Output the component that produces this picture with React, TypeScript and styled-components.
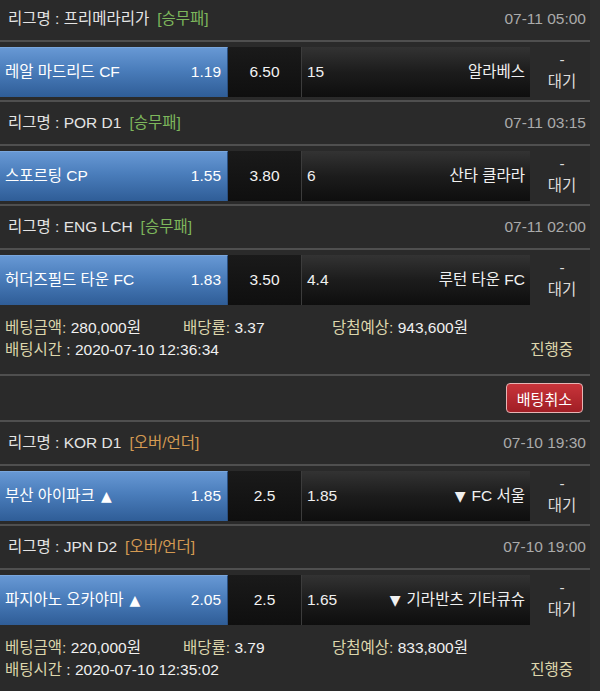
import styled, { createGlobalStyle } from 'styled-components'

const GlobalStyle = createGlobalStyle`
  html, body {
    margin: 0;
    padding: 0;
    background: #2e2e2e;
  }
  body {
    font-family: "Liberation Sans", "Noto Sans CJK KR", sans-serif;
    font-size: 15.5px;
    color: #e8e8e8;
    overflow: hidden;
  }
`

interface Match {
  league: string
  type: string
  date: string
  home: string
  homeOdds: string
  draw: string
  awayOdds: string
  away: string
  overUnder?: boolean
}

interface Bet {
  matches: Match[]
  amount: string
  rate: string
  expect: string
  time: string
  cancelable?: boolean
}

const bets: Bet[] = [
  {
    matches: [
      { league: '프리메라리가', type: '승무패', date: '07-11 05:00', home: '레알 마드리드 CF', homeOdds: '1.19', draw: '6.50', awayOdds: '15', away: '알라베스' },
      { league: 'POR D1', type: '승무패', date: '07-11 03:15', home: '스포르팅 CP', homeOdds: '1.55', draw: '3.80', awayOdds: '6', away: '산타 클라라' },
      { league: 'ENG LCH', type: '승무패', date: '07-11 02:00', home: '허더즈필드 타운 FC', homeOdds: '1.83', draw: '3.50', awayOdds: '4.4', away: '루턴 타운 FC' },
    ],
    amount: '280,000원',
    rate: '3.37',
    expect: '943,600원',
    time: '2020-07-10 12:36:34',
    cancelable: true,
  },
  {
    matches: [
      { league: 'KOR D1', type: '오버/언더', date: '07-10 19:30', home: '부산 아이파크', homeOdds: '1.85', draw: '2.5', awayOdds: '1.85', away: 'FC 서울', overUnder: true },
      { league: 'JPN D2', type: '오버/언더', date: '07-10 19:00', home: '파지아노 오카야마', homeOdds: '2.05', draw: '2.5', awayOdds: '1.65', away: '기라반츠 기타큐슈', overUnder: true },
    ],
    amount: '220,000원',
    rate: '3.79',
    expect: '833,800원',
    time: '2020-07-10 12:35:02',
  },
]

export default function App() {
  return (
    <>
      <GlobalStyle />
      <Page>
        {bets.map((bet, i) => (
          <div key={i}>
            {bet.matches.map((m, j) => (
              <div key={j}>
                <Header>
                  <League>
                    리그명 : {m.league}
                    <GameType $ou={!!m.overUnder}>[{m.type}]</GameType>
                  </League>
                  <DateText>{m.date}</DateText>
                </Header>
                <RowWrap $last={j === bet.matches.length - 1}>
                  <Row>
                    <HomeCell>
                      <span>
                        {m.home}
                        {m.overUnder && <Triangle>▲</Triangle>}
                      </span>
                      <span>{m.homeOdds}</span>
                    </HomeCell>
                    <DrawCell>{m.draw}</DrawCell>
                    <AwayCell>
                      <span>{m.awayOdds}</span>
                      <span>
                        {m.overUnder && <Triangle $left>▼</Triangle>}
                        {m.away}
                      </span>
                    </AwayCell>
                    <StatusCell>
                      <span>-</span>
                      <span>대기</span>
                    </StatusCell>
                  </Row>
                </RowWrap>
              </div>
            ))}
            <Info>
              <InfoItem>
                <Label>베팅금액:</Label> {bet.amount}
              </InfoItem>
              <InfoItem>
                <Label>배당률:</Label> {bet.rate}
              </InfoItem>
              <InfoItem>
                <Label>당첨예상:</Label> {bet.expect}
              </InfoItem>
              <TimeItem>
                <Label>배팅시간</Label> : {bet.time}
              </TimeItem>
              <Progress>진행중</Progress>
            </Info>
            {bet.cancelable && (
              <CancelBar>
                <CancelButton>배팅취소</CancelButton>
              </CancelBar>
            )}
          </div>
        ))}
      </Page>
    </>
  )
}

const Page = styled.div`
  width: 590px;
  margin-top: -2px;
  background: #2a2a2a;
`

const Header = styled.div`
  height: 42px;
  display: flex;
  align-items: center;
  justify-content: space-between;
  padding: 0 4px 0 8px;
  border-bottom: 2px solid #4f4f4f;
  line-height: 20px;
`

const League = styled.div`
  color: #e4e4e4;
  white-space: nowrap;
`

const GameType = styled.span<{ $ou: boolean }>`
  margin-left: 8px;
  color: ${(p) => (p.$ou ? '#d49a52' : '#7db75c')};
`

const DateText = styled.div`
  color: #ababab;
`

const RowWrap = styled.div<{ $last: boolean }>`
  padding: 5px 0 ${(p) => (p.$last ? '0' : '3px')};
  border-bottom: ${(p) => (p.$last ? 'none' : '2px solid #4f4f4f')};
`

const Row = styled.div`
  height: 50px;
  display: grid;
  grid-template-columns: 228px 73px 229px 1fr;
  line-height: 20px;
`

const HomeCell = styled.div`
  display: flex;
  align-items: center;
  justify-content: space-between;
  padding: 0 6px 1px 5px;
  color: #ffffff;
  background: linear-gradient(to bottom, #6798d4 0%, #4a7dbb 45%, #2f5d97 100%);
  border-top: 1px solid #79a6dc;
  border-right: 1px solid #2a4f80;
  white-space: nowrap;
`

const DrawCell = styled.div`
  display: flex;
  align-items: center;
  justify-content: center;
  padding-bottom: 1px;
  color: #f2f2f2;
  background: linear-gradient(to bottom, #1a1a1a, #0f0f0f);
`

const AwayCell = styled.div`
  display: flex;
  align-items: center;
  justify-content: space-between;
  padding: 0 5px 1px;
  color: #f0f0f0;
  border-left: 1px solid #3c3c3c;
  background: linear-gradient(to bottom, #333333 0%, #1c1c1c 50%, #0e0e0e 100%);
  white-space: nowrap;
`

const StatusCell = styled.div`
  display: flex;
  flex-direction: column;
  align-items: center;
  justify-content: center;
  padding: 0 0 2px 4px;
  line-height: 22px;
  color: #dcdcdc;
`

const Triangle = styled.span<{ $left?: boolean }>`
  font-family: "DejaVu Sans", sans-serif;
  font-size: 14px;
  margin: ${(p) => (p.$left ? '0 6px 0 0' : '0 0 0 6px')};
`

const Info = styled.div`
  display: grid;
  grid-template-columns: 178px 149px 1fr;
  grid-auto-rows: 22px;
  align-items: center;
  padding: 12px 0 13px 5px;
  border-bottom: 2px solid #4f4f4f;
  color: #f0f0f0;
  line-height: 20px;
`

const InfoItem = styled.div`
  white-space: nowrap;
`

const TimeItem = styled.div`
  grid-column: 1 / span 2;
  white-space: nowrap;
`

const Label = styled.span`
  color: #ddd6ac;
`

const Progress = styled.div`
  justify-self: end;
  padding-right: 17px;
  color: #ddd6ac;
`

const CancelBar = styled.div`
  display: flex;
  justify-content: flex-end;
  padding: 7px 7px;
  border-bottom: 2px solid #4f4f4f;
`

const CancelButton = styled.button`
  height: 30px;
  padding: 0 10px;
  border: 1px solid #e6b4b4;
  border-radius: 4px;
  background: linear-gradient(to bottom, #c8343a, #a11e25);
  color: #ffffff;
  font-family: "Liberation Sans", "Noto Sans CJK KR", sans-serif;
  font-size: 15px;
`
